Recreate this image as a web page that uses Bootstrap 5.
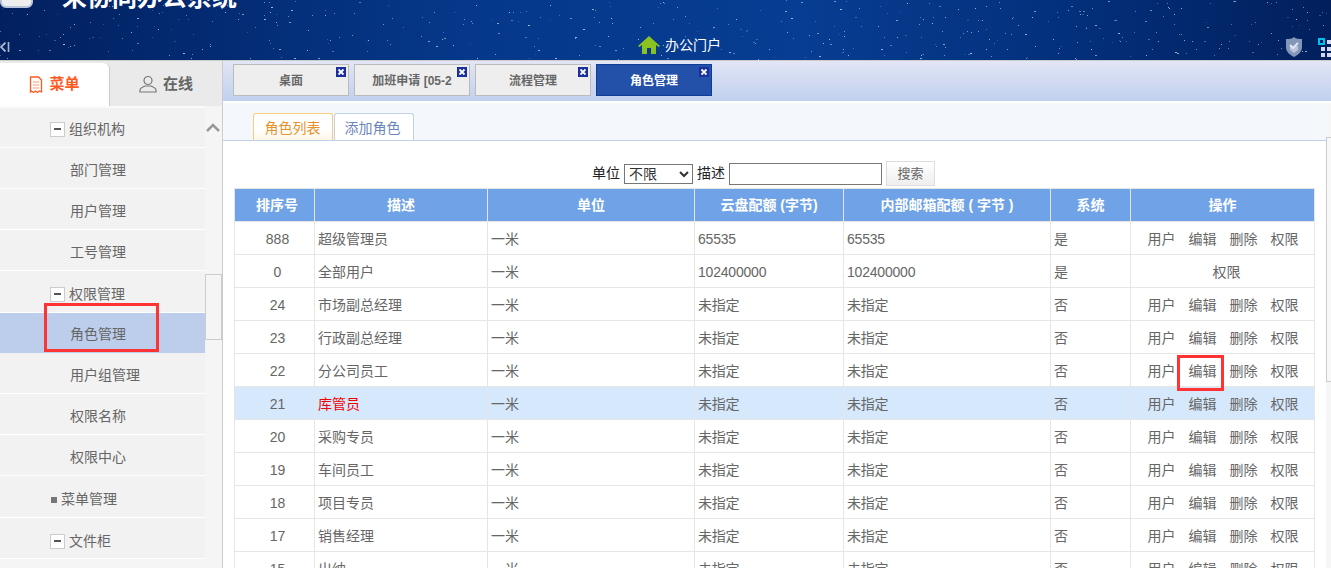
<!doctype html>
<html lang="zh">
  <head>
    <meta charset="utf-8" />
    <title>角色管理</title>
    <link href="https://cdn.jsdelivr.net/npm/bootstrap@5.3.2/dist/css/bootstrap.min.css" rel="stylesheet" />
    <style>
      html, body { height: 568px; overflow: hidden; }
      body { font-family: "Liberation Sans", "Noto Sans CJK SC", sans-serif; font-size: 14px; color: #666; background: #fff; }
      .top-bar { height: 61px; position: relative; overflow: hidden; background: linear-gradient(90deg, #02205f 0%, #05388a 35%, #073d92 60%, #03307c 80%, #021f5c 100%); border-bottom: 1px solid #ccc; }
      .stars { position: absolute; inset: 0; }
      .logo-box { position: absolute; left: 0; top: -22px; width: 33px; height: 30px; background: #eee; border: 2px solid #b8c4dc; border-radius: 6px; }
      .sys-title { position: absolute; left: 62px; top: -18px; font-size: 25px; font-weight: 700; color: #fff; line-height: 30px; white-space: nowrap; }
      .side-arrow { position: absolute; left: 0; top: 42px; }
      .portal { position: absolute; left: 638px; top: 35px; color: #fff; font-size: 14px; line-height: 20px; gap: 5px; }
      .shield-ico { position: absolute; left: 1285px; top: 37px; }
      .grid-ico { position: absolute; left: 1318px; top: 38px; }
      .main-wrap { height: 507px; }
      .side-col { width: 223px; flex: none; background: #f5f5f5; border-right: 1px solid #ccc; }
      .side-tabs { height: 45px; background: #eaeaea; }
      .side-tab { width: 110px; font-size: 15px; font-weight: 700; color: #666; gap: 6px; padding-top: 1px; }
      .side-tab.is-on { height: 43px; margin-top: 2px; padding-top: 0; background: #fff; color: #ff5a1f; border-radius: 0 6px 0 0; border-right: 1px solid #ccc; }
      .side-tab-off { width: 112px; }
      .side-body { height: 462px; overflow: hidden; }
      .menu-col { width: 205px; flex: none; }
      .menu-row { height: 41px; background: #f2f2f2; border-bottom: 1px solid #fff; font-size: 14px; color: #666; white-space: nowrap; }
      .menu-row.sub-row { padding-left: 70px; line-height: 44px; }
      .menu-row.grp-row { padding: 6px 0 0 50px; display: flex; align-items: center; gap: 4px; }
      .menu-row.first-row { height: 42px; padding-top: 4px; border-top: 2px solid #fafafa; }
      .menu-row.tall-row { height: 42px; }
      .menu-row.is-sel { height: 40px; line-height: 42px; background: #bdcdec; border-bottom: 0; }
      .menu-row.dot-row { height: 42px; padding: 6px 0 0 51px; display: flex; align-items: center; gap: 4px; }
      .minus-box { width: 15px; height: 15px; background: #fff; border: 1px solid #ccc; position: relative; flex: none; }
      .minus-box::after { content: ""; position: absolute; left: 3px; top: 5px; width: 7px; height: 2px; background: #555; }
      .dot-sq { width: 6px; height: 6px; background: #777; flex: none; }
      .scroll-track { flex: 1; position: relative; }
      .scroll-up { position: absolute; left: 1px; top: 17px; }
      .scroll-thumb { position: absolute; left: 0; top: 168px; width: 17px; height: 66px; background: #f5f5f5; border: 1px solid #ccc; }
      .red-mark { position: absolute; border: 3px solid #f33; pointer-events: none; }
      .mark-left { left: 44px; top: 303px; width: 115px; height: 49px; }
      .mark-right { left: 1177px; top: 355px; width: 47px; height: 36px; }
      .content-col { flex: 1; min-width: 0; position: relative; }
      .tab-strip { height: 40px; background: linear-gradient(180deg, #e2e5f5 0%, #c0d0ee 100%); padding: 3px 0 0 10px; gap: 5px; }
      .page-tab { width: 116px; height: 32px; background: #eee; border: 1px solid #bbb; font-size: 12px; font-weight: 700; color: #666; position: relative; line-height: 32px; text-align: center; white-space: nowrap; overflow: hidden; }
      .page-tab.is-on { background: #2350a9; border-color: #0d3d99; color: #fff; }
      .close-x { position: absolute; right: 2px; top: 2px; width: 10px; height: 10px; background: #1b2f9c; color: #fff; }
      .close-x svg { display: block; }
      .sub-tabs { height: 38px; margin-top: 2px; padding: 10px 0 0 30px; background: #f4f7fc; border-bottom: 1px solid #bed1e8; gap: 1px; }
      .sub-tab { width: 80px; height: 27px; line-height: 29px; padding-right: 3px; text-align: center; font-size: 14px; background: #fff; border: 1px solid #bed1e8; border-bottom: 0; border-radius: 3px 3px 0 0; color: #6b85bd; white-space: nowrap; }
      .sub-tab.is-on { padding-right: 1px; border-color: #f5cd7d; color: #e8912a; background: linear-gradient(180deg, #fff 60%, #fdf6e6 100%); }
      .filter-row { height: 47px; padding-top: 18px; margin-left: 11px; width: 1059px; gap: 4px; color: #222; font-size: 14px; }
      .filter-row select { width: 69px; height: 20px; font-size: 14px; font-family: inherit; padding: 0; border: 1px solid #777; background: #fff; color: #333; border-radius: 0; }
      .filter-row input { width: 153px; height: 22px; border: 1px solid #777; border-radius: 0; padding: 0; }
      .search-btn { height: 25px; width: 49px; padding: 0; font-size: 13px; border: 1px solid #ddd; color: #666; background: linear-gradient(180deg, #fff, #eee); border-radius: 0; }
      .role-table { margin-left: 11px; width: 1081px; table-layout: fixed; border-collapse: collapse; font-size: 14px; color: #666; }
      .role-table th { height: 33px; background: #6fa2e6; color: #fff; font-size: 14px; font-weight: 700; text-align: center; border: 1px solid #e6e6e6; padding: 0; }
      .role-table th:first-child { padding-left: 5px; }
      .role-table td { height: 33px; padding: 3px 3px 0; border: 1px solid #e6e6e6; white-space: nowrap; overflow: hidden; background: #fff; }
      .role-table tr.is-hot td { background: #d6e8fc; }
      .role-table .num-cell { text-align: center; padding-left: 9px; }
      .role-table .op-cell { text-align: center; padding-left: 4px; }
      .role-table .single-op { padding-left: 11px; }
      .op-cell span { margin: 0 6.5px; }
      .digit-val { letter-spacing: -0.2px; }
      .hot-name { color: #e00; }
      .right-scroll { position: absolute; left: 1103px; top: 42px; width: 5px; bottom: 0; background: #f6f6f6; }
      .right-thumb { margin-top: 34px; height: 245px; border: 1px solid #ccc; border-right: 0; background: #f8f8f8; }
    </style>
  </head>
  <body>
    <div class="top-bar">
      <svg class="stars" id="stars" width="1331" height="60"></svg>
      <div class="logo-box"></div>
      <div class="sys-title">未协同办公系统</div>
      <svg class="side-arrow" width="10" height="10" viewBox="0 0 10 10"><path d="M5.500 0.500 1 5l4.500 4.500" fill="none" stroke="#a9b6cf" stroke-width="1.800"/><path d="M8.500 0v10" stroke="#a9b6cf" stroke-width="1.600"/></svg>
      <div class="portal d-flex align-items-center">
        <svg width="22" height="20" viewBox="0 0 22 20"><path d="M11 1 0 11l1.500 1L4 10v9h5v-6h4v6h5v-9l2.500 2 1.500-1Z" fill="#8cc21f"/></svg>
        <span>办公门户</span>
      </div>
      <svg class="shield-ico" width="18" height="20" viewBox="0 0 18 20"><path d="M9 0c2 2 5 2 8 2v8c0 5-4 8-8 10-4-2-8-5-8-10V2c3 0 6 0 8-2Z" fill="#8597b8"/><path d="M5 9h8v4l-4 3-4-3Z" fill="#b9c5da"/><path d="m5 8 3 3 5-5" stroke="#dfe6f1" stroke-width="2" fill="none"/></svg>
      <svg class="grid-ico" width="13" height="20" viewBox="0 0 13 20"><rect x="0" y="0" width="7" height="7" fill="#00c0f0"/><rect x="2" y="2" width="3" height="3" fill="#04246a"/><rect x="9" y="2" width="4" height="4" fill="#d3d8f2"/><rect x="3" y="9" width="4" height="4" fill="#d3d8f2"/><rect x="9" y="9" width="4" height="4" fill="#d3d8f2"/><rect x="3" y="15" width="4" height="4" fill="#d3d8f2"/><rect x="9" y="15" width="4" height="4" fill="#d3d8f2"/></svg>
    </div>
    <div class="main-wrap d-flex">
      <div class="side-col">
        <div class="side-tabs d-flex">
          <div class="side-tab is-on d-flex align-items-center justify-content-center">
            <svg width="14" height="18" viewBox="0 0 14 18"><path d="M1.500 1h8l3 3v12l-2-1-2 1.500L6.500 15l-2 1.500L2.500 15l-1 1Z" fill="none" stroke="#ff5a1f" stroke-width="1.300"/><path d="M4 6h6M4 9h6M4 12h6" stroke="#ff9a70"/></svg>
            <span>菜单</span>
          </div>
          <div class="side-tab side-tab-off d-flex align-items-center justify-content-center">
            <svg width="18" height="18" viewBox="0 0 18 18"><circle cx="9" cy="5.500" r="4" fill="none" stroke="#777" stroke-width="1.200"/><path d="M1 17v-2c0-2 3-3 5-4h6c2 1 5 2 5 4v2Z" fill="none" stroke="#777" stroke-width="1.200"/></svg>
            <span>在线</span>
          </div>
        </div>
        <div class="side-body d-flex">
          <div class="menu-col">
            <div class="menu-row grp-row first-row"><span class="minus-box"></span>组织机构</div>
            <div class="menu-row sub-row">部门管理</div>
            <div class="menu-row sub-row">用户管理</div>
            <div class="menu-row sub-row">工号管理</div>
            <div class="menu-row grp-row tall-row"><span class="minus-box"></span>权限管理</div>
            <div class="menu-row sub-row is-sel">角色管理</div>
            <div class="menu-row sub-row">用户组管理</div>
            <div class="menu-row sub-row">权限名称</div>
            <div class="menu-row sub-row">权限中心</div>
            <div class="menu-row dot-row"><span class="dot-sq"></span>菜单管理</div>
            <div class="menu-row grp-row"><span class="minus-box"></span>文件柜</div>
          </div>
          <div class="scroll-track">
            <svg class="scroll-up" width="14" height="9" viewBox="0 0 14 9"><path d="M1 8l6-6 6 6" fill="none" stroke="#999" stroke-width="2.500"/></svg>
            <div class="scroll-thumb"></div>
          </div>
        </div>
      </div>
      <div class="content-col">
        <div class="tab-strip d-flex">
          <div class="page-tab">桌面<span class="close-x"><svg width="10" height="10" viewBox="0 0 10 10"><path d="m2.500 2.500 5 5m0-5-5 5" stroke="#fff" stroke-width="1.800"/></svg></span></div>
          <div class="page-tab">加班申请 [05-2<span class="close-x"><svg width="10" height="10" viewBox="0 0 10 10"><path d="m2.500 2.500 5 5m0-5-5 5" stroke="#fff" stroke-width="1.800"/></svg></span></div>
          <div class="page-tab">流程管理<span class="close-x"><svg width="10" height="10" viewBox="0 0 10 10"><path d="m2.500 2.500 5 5m0-5-5 5" stroke="#fff" stroke-width="1.800"/></svg></span></div>
          <div class="page-tab is-on">角色管理<span class="close-x"><svg width="10" height="10" viewBox="0 0 10 10"><path d="m2.500 2.500 5 5m0-5-5 5" stroke="#fff" stroke-width="1.800"/></svg></span></div>
        </div>
        <div class="sub-tabs d-flex">
          <div class="sub-tab is-on">角色列表</div>
          <div class="sub-tab">添加角色</div>
        </div>
        <div class="filter-row d-flex align-items-center justify-content-center">
          <span>单位</span>
          <select><option>不限</option></select>
          <span>描述</span>
          <input type="text" />
          <button class="search-btn" type="button">搜索</button>
        </div>
        <table class="role-table">
          <colgroup><col width="80" /><col width="173" /><col width="207" /><col width="149" /><col width="207" /><col width="80" /><col width="184" /></colgroup>
          <thead>
            <tr><th>排序号</th><th>描述</th><th>单位</th><th>云盘配额 (字节)</th><th>内部邮箱配额 ( 字节 )</th><th>系统</th><th>操作</th></tr>
          </thead>
          <tbody id="rows"></tbody>
        </table>
        <div class="right-scroll"><div class="right-thumb"></div></div>
      </div>
    </div>
    <div class="red-mark mark-left"></div>
    <div class="red-mark mark-right"></div>
    <script src="https://cdn.jsdelivr.net/npm/bootstrap@5.3.2/dist/js/bootstrap.bundle.min.js"></script>
    <script>
      // table rows
      var data = [
        [888, "超级管理员", "65535", "65535", "是"],
        [0, "全部用户", "102400000", "102400000", "是"],
        [24, "市场副总经理", "未指定", "未指定", "否"],
        [23, "行政副总经理", "未指定", "未指定", "否"],
        [22, "分公司员工", "未指定", "未指定", "否"],
        [21, "库管员", "未指定", "未指定", "否"],
        [20, "采购专员", "未指定", "未指定", "否"],
        [19, "车间员工", "未指定", "未指定", "否"],
        [18, "项目专员", "未指定", "未指定", "否"],
        [17, "销售经理", "未指定", "未指定", "否"],
        [15, "出纳", "未指定", "未指定", "否"],
      ];
      var html = "";
      data.forEach(function (r) {
        var single = r[0] === 0;
        var ops = single ? "<span>权限</span>" : "<span>用户</span><span>编辑</span><span>删除</span><span>权限</span>";
        var name = r[0] === 21 ? '<span class="hot-name">' + r[1] + "</span>" : r[1];
        html += "<tr" + (r[0] === 21 ? ' class="is-hot"' : "") + '><td class="num-cell">' + r[0] + "</td><td>" + name + '</td><td>一米</td><td class="digit-val">' + r[2] + '</td><td class="digit-val">' + r[3] + "</td><td>" + r[4] + '</td><td class="op-cell' + (single ? " single-op" : "") + '">' + ops + "</td></tr>";
      });
      document.getElementById("rows").innerHTML = html;

      // starfield in the header
      var svg = "", seed = 7;
      function rnd() { seed = (seed * 16807) % 2147483647; return seed / 2147483647; }
      for (var i = 0; i < 420; i++) {
        svg += '<rect x="' + Math.round(rnd() * 1331) + '" y="' + Math.round(rnd() * 60) + '" width="' + (rnd() > 0.8 ? 2 : 1) + '" height="1" fill="#fff" opacity="' + (0.15 + rnd() * 0.5).toFixed(2) + '"/>';
      }
      document.getElementById("stars").innerHTML = svg;
    </script>
  </body>
</html>
